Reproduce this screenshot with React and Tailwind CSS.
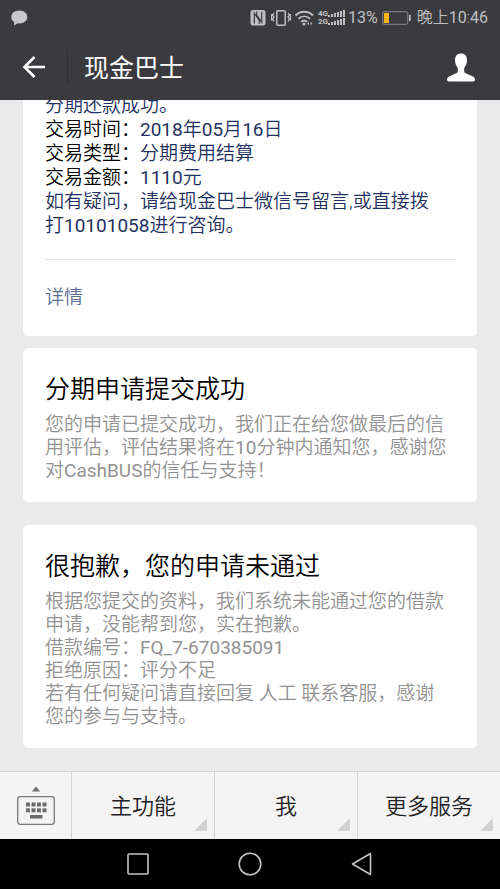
const menuItems = ['主功能', '我', '更多服务'];

const details = [
  { label: '交易时间：', value: '2018年05月16日' },
  { label: '交易类型：', value: '分期费用结算' },
  { label: '交易金额：', value: '1110元' },
];

const messages = [
  {
    title: '分期申请提交成功',
    lines: [
      '您的申请已提交成功，我们正在给您做最后的信',
      '用评估，评估结果将在10分钟内通知您，感谢您',
      '对CashBUS的信任与支持！',
    ],
  },
  {
    title: '很抱歉，您的申请未通过',
    lines: [
      '根据您提交的资料，我们系统未能通过您的借款',
      '申请，没能帮到您，实在抱歉。',
      '借款编号：FQ_7-670385091',
      '拒绝原因：评分不足',
      '若有任何疑问请直接回复 人工 联系客服，感谢',
      '您的参与与支持。',
    ],
  },
];

const signalBars = [0, 1, 2, 3, 4, 5];

// Latin letters and digits are set in the regular weight, Chinese a bit lighter
const Mixed = ({ text }) =>
  text.split(/([\w-]+)/).map((part, i) =>
    i % 2 ? <span key={i} className="font-normal">{part}</span> : part
  );

const StatusBar = () => (
  <div className="flex h-8 items-center justify-between pl-[11px] pr-3 pt-1 text-[#c0c0c3]">
    <svg width="17" height="16" viewBox="0 0 17 16" fill="#c8c8cb">
      <path d="M8.5 0.5C3.8 0.5 0.3 3.3 0.3 7c0 2.2 1.2 4 3 5.2L3 15.5l3.8-2.2c.6.1 1.1.1 1.7.1 4.6 0 7.8-2.8 7.8-6.4S13.1.5 8.5.5z" />
    </svg>
    <div className="flex items-center">
      {/* NFC, vibrate, Wi-Fi */}
      <svg className="mr-1" width="64" height="18" viewBox="0 0 64 18" fill="none" stroke="#c0c0c3">
        <rect x="0.5" y="1" width="15" height="15.5" rx="2.5" fill="#c0c0c3" stroke="none" />
        <path d="M4.3 14.5V4.2l5 7.3v3.5M11.7 3v10.3l-5-7.3V2.500" stroke="#3a3a3f" strokeWidth="1.2" />
        <rect x="26.8" y="1.8" width="8.4" height="14.4" rx="1" strokeWidth="1.5" />
        <path d="M24 4l-1.3 2 1.3 2-1.3 2 1.3 2.5M21.6 5v6.5M38 4l1.3 2-1.3 2 1.3 2-1.3 2.5M40.4 5v6.5" strokeWidth="1.3" />
        <path d="M45.5 6.5c5-5 12.5-5 17.5 0M48.5 9.8c3.5-3.3 8-3.3 11.5 0M51.3 12.8c1.8-1.6 4-1.6 5.8 0" strokeWidth="1.9" />
        <circle cx="54" cy="15" r="1.6" fill="#c0c0c3" stroke="none" />
        <path d="M59 12.8L57.2 14.5 59 16.2zM60.6 12.8l1.8 1.7-1.8 1.7z" fill="#c0c0c3" stroke="none" />
      </svg>
      <div className="text-[8px] font-bold leading-[8px]">
        <div>4G</div>
        <div>2G</div>
      </div>
      <svg width="17" height="18" viewBox="0 0 17 18" fill="#c0c0c3">
        {signalBars.map((i) => (
          <g key={i}>
            <rect x={i * 3} y={6 - i} width="2" height={2 + i} />
            <rect x={i * 3} y={14 - i} width="2" height={2 + i} />
          </g>
        ))}
      </svg>
      <span className="ml-[3px] text-[16px]">13%</span>
      <svg className="ml-1 mr-[6px]" width="29" height="14" viewBox="0 0 29 14" fill="none">
        <rect x="0.7" y="0.7" width="25" height="12.6" rx="2" stroke="#77777b" strokeWidth="1.3" />
        <rect x="2" y="2" width="5" height="10" fill="#fbb615" />
        <rect x="27" y="4" width="1.7" height="6" fill="#c0c0c3" />
      </svg>
      <span className="text-[16px] font-[350]"><Mixed text="晚上10:46" /></span>
    </div>
  </div>
);

const TitleBar = () => (
  <div className="flex h-[70px] items-center pl-[22px] pr-[25px]">
    <button aria-label="返回">
      <svg width="24" height="22" viewBox="0 0 24 22" fill="none" stroke="white" strokeWidth="2.6">
        <path d="M12.5 1L2.5 11l10 10M2 11h21" />
      </svg>
    </button>
    <div className="ml-[21px] h-[34px] w-px bg-[#303034]" />
    <h1 className="ml-4 pt-1 text-[25px]">现金巴士</h1>
    <button aria-label="账号" className="ml-auto">
      <svg width="28" height="29" viewBox="0 0 28 29" fill="white">
        <path d="M14 0.5c-4 0-6 2.7-6 6.5 0 3.3 1.2 6 2.8 8v3.2c0 1-.6 1.7-1.6 2.1L2 23.6c-1.2.6-2 1.6-2 3 0 1.3.6 1.9 1.8 1.9h24.4c1.2 0 1.8-.6 1.8-1.9 0-1.4-.8-2.4-2-3l-7.2-3.3c-1-.4-1.6-1.1-1.6-2.1V15c1.6-2 2.8-4.7 2.8-8 0-3.8-2-6.5-6-6.5z" />
      </svg>
    </button>
  </div>
);

const MenuBar = () => (
  <div className="flex h-[68px] shrink-0 border-t border-[#d4d4d4] bg-[#f4f4f4]">
    <button aria-label="键盘" className="flex w-[71px] shrink-0 items-center justify-center">
      <svg width="38" height="40" viewBox="0 0 38 40" fill="#6b6b6b">
        <path d="M19 0.5l4 5h-8z" />
        <rect x="0.7" y="10.7" width="36.6" height="27.6" rx="2.5" fill="none" stroke="#77777a" strokeWidth="1.3" />
        {[9, 14.5, 20, 25.5].map((x) => (
          <g key={x}>
            <rect x={x} y="16.5" width="4" height="4" />
            <rect x={x} y="22.3" width="4" height="4" />
          </g>
        ))}
        <rect x="13" y="29" width="12.5" height="3.5" />
      </svg>
    </button>
    {menuItems.map((item) => (
      <button
        key={item}
        className="relative flex-1 border-l border-[#d4d4d4] pt-[2px] text-[22px] font-[350] text-[#222]"
      >
        {item}
        <svg className="absolute bottom-2 right-[7px]" width="13" height="13" viewBox="0 0 13 13" fill="#d2d2d2">
          <path d="M13 0v13H0z" />
        </svg>
      </button>
    ))}
  </div>
);

const SystemNav = () => (
  <nav className="flex h-[50px] shrink-0 items-center justify-center gap-[89px] bg-black">
    <button aria-label="最近任务">
      <svg width="22" height="22" viewBox="0 0 22 22" fill="none" stroke="#c4c4c4" strokeWidth="1.6">
        <rect x="1" y="1" width="20" height="20" rx="1" />
      </svg>
    </button>
    <button aria-label="主屏幕">
      <svg width="24" height="24" viewBox="0 0 24 24" fill="none" stroke="#c4c4c4" strokeWidth="1.6">
        <circle cx="12" cy="12" r="10.8" />
      </svg>
    </button>
    <button aria-label="后退">
      <svg width="22" height="24" viewBox="0 0 22 24" fill="none" stroke="#c4c4c4" strokeWidth="1.6" strokeLinejoin="round">
        <path d="M19.5 1.5v21L1.5 12z" />
      </svg>
    </button>
  </nav>
);

export default function App() {
  return (
    <div className="flex h-screen flex-col overflow-hidden bg-[#eaeaea] font-['Roboto','Noto_Sans_CJK_SC',sans-serif]">
      <header className="h-[100px] shrink-0 bg-[#3a3a3f] text-white">
        <StatusBar />
        <TitleBar />
      </header>

      {/* Messages, scrolled to the latest */}
      <main className="flex min-h-0 flex-1 flex-col justify-end overflow-hidden px-[23px] pb-[23px]">
        <article className="shrink-0 rounded-[5px] bg-white px-[22px] text-[19px] font-[350] leading-[24px] text-[#1f3160]">
          <p>分期还款成功。</p>
          {details.map((d) => (
            <p key={d.label}>
              <span className="text-black">{d.label}</span>
              <Mixed text={d.value} />
            </p>
          ))}
          <p>
            如有疑问，请给现金巴士微信号留言,或直接拨
            <br />
            <Mixed text="打10101058进行咨询。" />
          </p>
          <div className="mt-[21px] border-t border-[#e2e2e2] pb-[26px] pt-[26px]">
            <a href="#" className="text-[#5b6f94]">详情</a>
          </div>
        </article>

        {messages.map((m, i) => (
          <article
            key={m.title}
            className={`shrink-0 rounded-[5px] bg-white px-[22px] pb-5 pt-[27px] ${i === 0 ? 'mt-3' : 'mt-[23px]'}`}
          >
            <h2 className="text-[25px] font-[350] leading-[30px] text-black">{m.title}</h2>
            <p className="mt-2 text-[19px] font-[350] leading-[23px] text-[#929292]">
              {m.lines.map((line) => (
                <span key={line} className="block whitespace-nowrap"><Mixed text={line} /></span>
              ))}
            </p>
          </article>
        ))}
      </main>

      <MenuBar />
      <SystemNav />
    </div>
  );
}
